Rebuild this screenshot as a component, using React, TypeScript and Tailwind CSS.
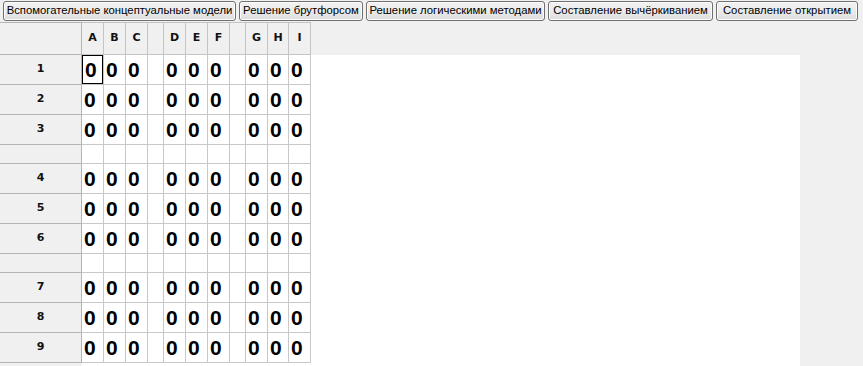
import React from 'react';

const buttons = [
  { label: 'Вспомогательные концептуальные модели', w: 'w-[233px]' },
  { label: 'Решение брутфорсом', w: 'w-[124px]' },
  { label: 'Решение логическими методами', w: 'w-[179px]' },
  { label: 'Составление вычёркиванием', w: 'w-[165px]' },
  { label: 'Составление открытием', w: 'w-[142px]' },
];

// column layout of the sudoku grid, blank columns separate the 3x3 blocks
const columns = [
  { label: 'A', w: 'w-[22px]' },
  { label: 'B', w: 'w-[22px]' },
  { label: 'C', w: 'w-[22px]' },
  { label: '', w: 'w-[16px]' },
  { label: 'D', w: 'w-[22px]' },
  { label: 'E', w: 'w-[22px]' },
  { label: 'F', w: 'w-[22px]' },
  { label: '', w: 'w-[16px]' },
  { label: 'G', w: 'w-[22px]' },
  { label: 'H', w: 'w-[21px]' },
  { label: 'I', w: 'w-[22px]' },
];

const rows: (number | null)[] = [1, 2, 3, null, 4, 5, 6, null, 7, 8, 9];

export default function App() {
  return (
    <div className="w-[863px] h-[366px] overflow-hidden bg-[#f0f0f0] flex flex-col font-['Liberation_Sans',sans-serif]">
      <div className="h-[22px] flex gap-[3px] pl-[3px] pt-[1px]">
        {buttons.map((b) => (
          <button
            key={b.label}
            className={`${b.w} h-[20px] rounded-[3px] border border-[#707070] bg-gradient-to-b from-[#f2f2f2] via-[#ebebeb] to-[#dddddd] text-[11.3px] leading-none text-black shadow-[inset_0_0_0_1px_#fcfcfc] whitespace-nowrap`}
          >
            {b.label}
          </button>
        ))}
      </div>

      <div className="flex flex-1 w-[800px]">
        {/* vertical header */}
        <div className="w-[82px] flex flex-col bg-[#f0f0f0]">
          <div className="h-[33px] border-t border-b border-r border-[#b4b4b4]" />
          {rows.map((r, i) => (
            <div
              key={i}
              className={`${r === null ? 'h-[19px]' : 'h-[30px]'} border-b border-r border-[#b4b4b4] flex items-center justify-center text-[11px] font-bold text-[#111] font-['DejaVu_Sans',sans-serif]`}
            >
              {r}
            </div>
          ))}
        </div>

        <div className="flex-1 flex flex-col">
          {/* horizontal header */}
          <div className="h-[33px] flex bg-[#f0f0f0]">
            {columns.map((c, i) => (
              <div
                key={i}
                className={`${c.w} h-full border-t border-b border-r border-[#c4c4c4] flex items-center justify-center text-[11px] font-bold text-[#111] font-['DejaVu_Sans',sans-serif]`}
              >
                {c.label}
              </div>
            ))}
          </div>

          <div className="flex-1 bg-white flex flex-col">
            {rows.map((r, ri) => (
              <div key={ri} className={`flex ${r === null ? 'h-[19px]' : 'h-[30px]'}`}>
                {columns.map((c, ci) => (
                  <div key={ci} className={`${c.w} h-full border-b border-r border-[#c8c8c8]`}>
                    {r !== null && c.label !== '' && (
                      <div
                        className={`h-full flex items-center pl-[2px] text-[21px] font-bold text-black ${
                          ri === 0 && ci === 0 ? 'border border-black pl-[1px]' : ''
                        }`}
                      >
                        0
                      </div>
                    )}
                  </div>
                ))}
              </div>
            ))}
          </div>
        </div>
      </div>
    </div>
  );
}
